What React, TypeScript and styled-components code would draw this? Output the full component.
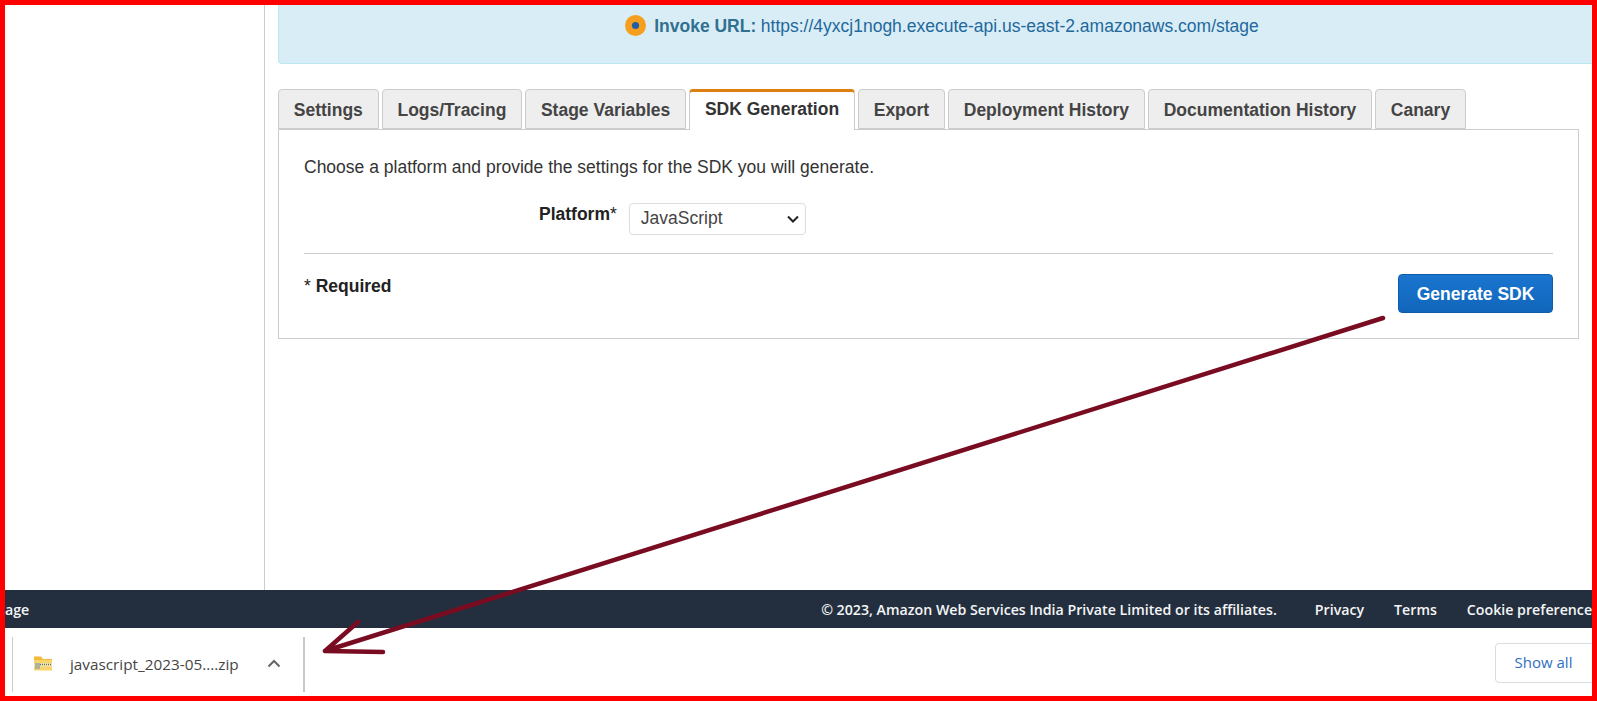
import React from 'react';
import styled, { createGlobalStyle } from 'styled-components';

const GlobalStyle = createGlobalStyle`
  html, body {
    margin: 0;
    padding: 0;
    background: #fff;
    font-family: "Liberation Sans", Arial, sans-serif;
  }
  * {
    box-sizing: border-box;
  }
`;

const Frame = styled.div`
  position: relative;
  width: 1597px;
  height: 701px;
  border: 5px solid #fe0000;
  display: flex;
  flex-direction: column;
  overflow: hidden;
  background: #fff;
`;

const Body = styled.div`
  flex: none;
  height: 585px;
  display: flex;
`;

const Sidebar = styled.aside`
  width: 260px;
  flex: none;
  border-right: 1px solid #ccc;
`;

const Main = styled.main`
  flex: 1;
  min-width: 0;
  padding-left: 13px;
`;

const Banner = styled.div`
  height: 59px;
  background: #d9edf7;
  border-bottom: 1px solid #bce8f1;
  border-left: 1px solid #bce8f1;
  border-bottom-left-radius: 4px;
  display: flex;
  justify-content: center;
  align-items: flex-start;
  gap: 8px;
  padding: 10px 0 0 13px;
  font-size: 17.5px;
  line-height: 22px;
`;

const InvokeLabel = styled.b`
  color: #31708f;
`;

const InvokeLink = styled.a`
  color: #23689b;
  margin-left: 4.5px;
  font-weight: 400;
`;

const BannerText = styled.span`
  color: #31708f;
`;

const Tabs = styled.div`
  display: flex;
  gap: 3px;
  margin-top: 25px;
  height: 41px;
  position: relative;
  z-index: 1;
`;

const Tab = styled.div<{ $active?: boolean }>`
  height: ${({ $active }) => ($active ? '41px' : '40px')};
  padding: 2px 14.8px 0;
  display: flex;
  align-items: center;
  font-size: 17.5px;
  font-weight: 700;
  color: #444;
  white-space: nowrap;
  background: ${({ $active }) => ($active ? '#fff' : '#eee')};
  border: 1px solid #ccc;
  border-radius: 4px 4px 0 0;
  ${({ $active }) =>
    $active
      ? `
    border-top: 3px solid #dd7f12;
    border-bottom: none;
    color: #333;
    padding-top: 0;
    padding-bottom: 3px;
  `
      : ''}
`;

const Panel = styled.section`
  margin-top: -1px;
  margin-right: 13px;
  height: 210px;
  border: 1px solid #ccc;
  padding: 24px 25px 0;
  color: #333;
`;

const Intro = styled.p`
  margin: 0;
  font-size: 17.5px;
  line-height: 26px;
`;

const FormRow = styled.div`
  display: flex;
  align-items: flex-start;
  margin-top: 23px;
  padding-left: 235px;
  gap: 12px;
`;

const FieldLabel = styled.label`
  font-size: 17.5px;
  font-weight: 700;
  line-height: 22px;
  color: #222;
`;

const LabelMark = styled.span`
  font-weight: 400;
`;

const PlatformSelect = styled.select`
  appearance: none;
  width: 177px;
  height: 32px;
  padding: 0 11px 2px;
  background: #fff
    url("data:image/svg+xml,%3Csvg xmlns='http://www.w3.org/2000/svg' width='12' height='8'%3E%3Cpath d='M1 1.5 L6 6.5 L11 1.5' fill='none' stroke='%23222' stroke-width='2'/%3E%3C/svg%3E")
    no-repeat right 6px center;
  border: 1px solid #ddd;
  border-radius: 4px;
  font-family: "Liberation Sans", Arial, sans-serif;
  font-size: 17.5px;
  color: #444;
`;

const Divider = styled.hr`
  margin: 18px 0 0;
  border: none;
  border-top: 1px solid #ccc;
`;

const ActionRow = styled.div`
  display: flex;
  justify-content: space-between;
  align-items: flex-start;
  margin-top: 20px;
`;

const Required = styled.div`
  font-size: 17.5px;
  font-weight: 700;
  line-height: 24px;
  color: #222;
`;

const PrimaryButton = styled.button`
  width: 155px;
  height: 39px;
  padding: 1px 0 0;
  border: 1px solid #0f5ba8;
  border-radius: 4px;
  background: linear-gradient(#1a75cf, #1166bb);
  color: #fff;
  font-family: "Liberation Sans", Arial, sans-serif;
  font-size: 17.5px;
  font-weight: 700;
`;

const Footer = styled.footer`
  height: 38px;
  flex: none;
  background: #232f3e;
  color: #f4f5f6;
  display: flex;
  align-items: center;
  font-family: "Open Sans", sans-serif;
  font-size: 14.2px;
  font-weight: 600;
  white-space: nowrap;
`;

const FooterLead = styled.span`
  margin-right: auto;
`;

const FooterLinks = styled.div`
  display: flex;
  gap: 30px;
  margin-right: -7px;
`;

const Copyright = styled.span`
  margin-right: 8px;
`;

const Shelf = styled.div`
  flex: 1;
  display: flex;
  align-items: flex-start;
  justify-content: space-between;
  padding: 9px 0 0 7px;
  min-height: 0;
`;

const DownloadItem = styled.div`
  width: 293px;
  height: 55px;
  display: flex;
  align-items: center;
  border-left: 1px solid #ccc;
  border-right: 2px solid #c8c8c8;
  padding: 0 22px 2px 21px;
  font-family: "Open Sans", sans-serif;
  font-size: 15.3px;
  color: #444;
`;

const FileName = styled.span`
  margin-left: 18px;
  flex: 1;
  white-space: nowrap;
`;

const ShowAll = styled.button`
  width: 107px;
  height: 40px;
  margin: 6px -10px 0 0;
  padding: 0 10px 2px 0;
  background: #fff;
  border: 1px solid #dadce0;
  border-radius: 4px;
  color: #2f6fc4;
  font-family: "Open Sans", sans-serif;
  font-size: 15px;
  font-weight: 500;
`;

const ArrowOverlay = styled.svg`
  position: absolute;
  top: -5px;
  left: -5px;
  width: 1597px;
  height: 701px;
  pointer-events: none;
  z-index: 2;
`;

const ZipIcon = () => (
  <svg width="18" height="15" viewBox="0 0 18 15" aria-hidden="true">
    <path d="M0 3 L0 0.5 L7 0.5 L9 3 L18 3 L18 6 L0 6 Z" fill="#f3b93a" />
    <rect x="0" y="4" width="18" height="10.5" fill="#f8d66d" />
    <rect x="0" y="7" width="18" height="3.5" fill="#efe6b8" />
    <path d="M6 8.5 H18" stroke="#6b6f45" strokeWidth="1.4" strokeDasharray="1 1" />
    <rect x="1" y="7" width="5" height="6" fill="#aeb49a" />
  </svg>
);

const ChevronIcon = () => (
  <svg width="14" height="9" viewBox="0 0 14 9" aria-hidden="true">
    <path d="M1.5 7.5 L7 2 L12.5 7.5" fill="none" stroke="#666" strokeWidth="2" />
  </svg>
);

const InvokeIcon = () => (
  <svg width="21" height="21" viewBox="0 0 21 21" aria-hidden="true">
    <circle cx="10.5" cy="10.5" r="10.5" fill="#f69f1e" />
    <circle cx="10.5" cy="10.5" r="3.6" fill="#1f5fa8" />
  </svg>
);

const tabs = [
  'Settings',
  'Logs/Tracing',
  'Stage Variables',
  'SDK Generation',
  'Export',
  'Deployment History',
  'Documentation History',
  'Canary',
];

const App = () => (
  <>
    <GlobalStyle />
    <Frame>
      <Body>
        <Sidebar />
        <Main>
          <Banner>
            <InvokeIcon />
            <BannerText>
              <InvokeLabel>Invoke URL:</InvokeLabel>
              <InvokeLink>https://4yxcj1nogh.execute-api.us-east-2.amazonaws.com/stage</InvokeLink>
            </BannerText>
          </Banner>
          <Tabs>
            {tabs.map((t) => (
              <Tab key={t} $active={t === 'SDK Generation'}>
                {t}
              </Tab>
            ))}
          </Tabs>
          <Panel>
            <Intro>Choose a platform and provide the settings for the SDK you will generate.</Intro>
            <FormRow>
              <FieldLabel>
                Platform<LabelMark>*</LabelMark>
              </FieldLabel>
              <PlatformSelect defaultValue="JavaScript">
                <option>JavaScript</option>
              </PlatformSelect>
            </FormRow>
            <Divider />
            <ActionRow>
              <Required>
                <LabelMark>*</LabelMark> Required
              </Required>
              <PrimaryButton>Generate SDK</PrimaryButton>
            </ActionRow>
          </Panel>
        </Main>
      </Body>
      <Footer>
        <FooterLead>age</FooterLead>
        <FooterLinks>
          <Copyright>© 2023, Amazon Web Services India Private Limited or its affiliates.</Copyright>
          <span>Privacy</span>
          <span>Terms</span>
          <span>Cookie preferences</span>
        </FooterLinks>
      </Footer>
      <Shelf>
        <DownloadItem>
          <ZipIcon />
          <FileName>javascript_2023-05....zip</FileName>
          <ChevronIcon />
        </DownloadItem>
        <ShowAll>Show all</ShowAll>
      </Shelf>
      <ArrowOverlay viewBox="0 0 1597 701" aria-hidden="true">
        <path
          d="M1383 318 L325 651 M358 622 L325 651 L383 652"
          fill="none"
          stroke="#7a0c22"
          strokeWidth="4.5"
          strokeLinecap="round"
          strokeLinejoin="round"
        />
      </ArrowOverlay>
    </Frame>
  </>
);

export default App;
